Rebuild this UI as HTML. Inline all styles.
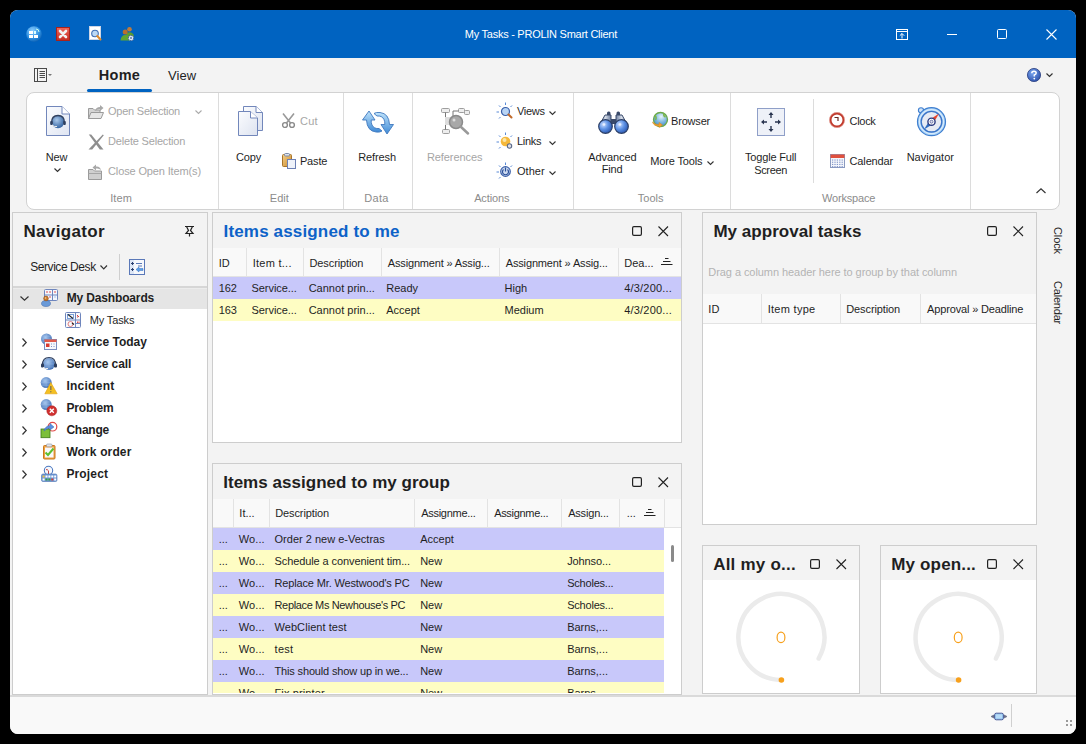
<!DOCTYPE html><html><head><meta charset="utf-8"><style>
html,body{margin:0;padding:0;background:#000;width:1086px;height:744px;overflow:hidden;}
.t{position:absolute;white-space:nowrap;line-height:1;font-family:"Liberation Sans",sans-serif}
svg{overflow:visible}
</style></head><body>
<div style="position:absolute;left:10px;top:10px;width:1066px;height:724px;border-radius:8px;overflow:hidden;background:#f3f3f3">
<div style="position:absolute;left:0px;top:0px;width:1066px;height:48px;background:#0063c1"></div>
<div style="position:absolute;left:0px;top:685px;width:1066px;height:39px;background:#f9f9f9;border-top:2px solid #dadada;box-sizing:border-box"></div>
</div>
<div style="position:absolute;left:26px;top:92px;width:1034px;height:118px;background:#fff;border:1px solid #d2d2d2;border-radius:8px;box-sizing:border-box"></div>
<div style="position:absolute;left:218px;top:93px;width:1px;height:116px;background:#dcdcdc"></div>
<div style="position:absolute;left:343px;top:93px;width:1px;height:116px;background:#dcdcdc"></div>
<div style="position:absolute;left:412px;top:93px;width:1px;height:116px;background:#dcdcdc"></div>
<div style="position:absolute;left:573px;top:93px;width:1px;height:116px;background:#dcdcdc"></div>
<div style="position:absolute;left:730px;top:93px;width:1px;height:116px;background:#dcdcdc"></div>
<div style="position:absolute;left:970px;top:93px;width:1px;height:116px;background:#dcdcdc"></div>
<div style="position:absolute;left:813px;top:99px;width:1px;height:84px;background:#dcdcdc"></div>
<div style="position:absolute;left:87px;top:89px;width:65px;height:3px;background:#0063c1;border-radius:2px"></div>
<div class="t" style="left:464.84px;top:28.54px;font-size:11px;color:#ffffff;letter-spacing:-0.261px;">My Tasks - PROLIN Smart Client</div>
<div class="t" style="left:98.73px;top:68.08px;font-size:14.5px;color:#1f1f1f;font-weight:bold;letter-spacing:0.300px;">Home</div>
<div class="t" style="left:168.02px;top:69.35px;font-size:13px;color:#1f1f1f;letter-spacing:0.033px;">View</div>
<div class="t" style="left:108.04px;top:106.04px;font-size:11px;color:#a6a6a6;letter-spacing:-0.233px;">Open Selection</div>
<div class="t" style="left:108.04px;top:135.74px;font-size:11px;color:#a6a6a6;letter-spacing:-0.188px;">Delete Selection</div>
<div class="t" style="left:108.04px;top:165.64px;font-size:11px;color:#a6a6a6;letter-spacing:-0.134px;">Close Open Item(s)</div>
<div class="t" style="left:45.64px;top:152.04px;font-size:11px;color:#1f1f1f;letter-spacing:-0.063px;">New</div>
<div class="t" style="left:110.14px;top:193.04px;font-size:11px;color:#8c8c8c;letter-spacing:0.163px;">Item</div>
<div class="t" style="left:235.94px;top:151.84px;font-size:11px;color:#1f1f1f;letter-spacing:-0.099px;">Copy</div>
<div class="t" style="left:299.94px;top:116.04px;font-size:11px;color:#a6a6a6;letter-spacing:0.300px;">Cut</div>
<div class="t" style="left:299.94px;top:155.74px;font-size:11px;color:#1f1f1f;letter-spacing:-0.162px;">Paste</div>
<div class="t" style="left:269.84px;top:193.04px;font-size:11px;color:#8c8c8c;letter-spacing:0.009px;">Edit</div>
<div class="t" style="left:358.14px;top:152.04px;font-size:11px;color:#1f1f1f;letter-spacing:-0.106px;">Refresh</div>
<div class="t" style="left:364.34px;top:193.04px;font-size:11px;color:#8c8c8c;letter-spacing:0.300px;">Data</div>
<div class="t" style="left:426.94px;top:152.04px;font-size:11px;color:#a6a6a6;letter-spacing:-0.085px;">References</div>
<div class="t" style="left:516.94px;top:106.04px;font-size:11px;color:#1f1f1f;letter-spacing:-0.300px;">Views</div>
<div class="t" style="left:516.94px;top:136.04px;font-size:11px;color:#1f1f1f;letter-spacing:-0.300px;">Links</div>
<div class="t" style="left:516.94px;top:166.34px;font-size:11px;color:#1f1f1f;letter-spacing:0.068px;">Other</div>
<div class="t" style="left:474.14px;top:193.04px;font-size:11px;color:#8c8c8c;letter-spacing:-0.099px;">Actions</div>
<div class="t" style="left:588.24px;top:152.04px;font-size:11px;color:#1f1f1f;letter-spacing:-0.077px;">Advanced</div>
<div class="t" style="left:601.84px;top:164.44px;font-size:11px;color:#1f1f1f;letter-spacing:-0.206px;">Find</div>
<div class="t" style="left:671.04px;top:115.84px;font-size:11px;color:#1f1f1f;letter-spacing:-0.193px;">Browser</div>
<div class="t" style="left:650.14px;top:155.64px;font-size:11px;color:#1f1f1f;letter-spacing:-0.124px;">More Tools</div>
<div class="t" style="left:637.64px;top:193.04px;font-size:11px;color:#8c8c8c;letter-spacing:0.075px;">Tools</div>
<div class="t" style="left:745.04px;top:151.64px;font-size:11px;color:#1f1f1f;letter-spacing:-0.171px;">Toggle Full</div>
<div class="t" style="left:754.24px;top:164.54px;font-size:11px;color:#1f1f1f;letter-spacing:-0.354px;">Screen</div>
<div class="t" style="left:849.54px;top:116.24px;font-size:11px;color:#1f1f1f;letter-spacing:-0.300px;">Clock</div>
<div class="t" style="left:849.54px;top:155.84px;font-size:11px;color:#1f1f1f;letter-spacing:-0.137px;">Calendar</div>
<div class="t" style="left:906.64px;top:151.64px;font-size:11px;color:#1f1f1f;letter-spacing:0.038px;">Navigator</div>
<div class="t" style="left:822.04px;top:193.04px;font-size:11px;color:#8c8c8c;letter-spacing:-0.192px;">Workspace</div>
<div style="position:absolute;left:12px;top:212px;width:196px;height:483px;background:#fff;border:1px solid #cdcdcd;box-sizing:border-box"></div>
<div style="position:absolute;left:13px;top:213px;width:194px;height:75px;background:#f3f3f3"></div>
<div style="position:absolute;left:13px;top:286px;width:194px;height:2px;background:#d6d6d6"></div>
<div style="position:absolute;left:13px;top:288px;width:194px;height:1px;background:#ececec"></div>
<div style="position:absolute;left:13px;top:289px;width:194px;height:20px;background:#e5e5e5"></div>
<div class="t" style="left:23.48px;top:223.16px;font-size:17px;color:#1f1f1f;font-weight:bold;letter-spacing:0.332px;">Navigator</div>
<div class="t" style="left:30.18px;top:261.29px;font-size:12px;color:#1f1f1f;letter-spacing:-0.430px;">Service Desk</div>
<div style="position:absolute;left:119px;top:254px;width:1px;height:26px;background:#cfcfcf"></div>
<div class="t" style="left:66.68px;top:291.89px;font-size:12px;color:#1f1f1f;font-weight:bold;letter-spacing:-0.149px;">My Dashboards</div>
<div class="t" style="left:89.64px;top:315.04px;font-size:11px;color:#1f1f1f;letter-spacing:-0.122px;">My Tasks</div>
<div class="t" style="left:66.38px;top:336.19px;font-size:12px;color:#1f1f1f;font-weight:bold;letter-spacing:0.007px;">Service Today</div>
<div class="t" style="left:66.38px;top:358.19px;font-size:12px;color:#1f1f1f;font-weight:bold;letter-spacing:-0.099px;">Service call</div>
<div class="t" style="left:66.38px;top:380.19px;font-size:12px;color:#1f1f1f;font-weight:bold;letter-spacing:0.266px;">Incident</div>
<div class="t" style="left:66.38px;top:402.19px;font-size:12px;color:#1f1f1f;font-weight:bold;letter-spacing:-0.109px;">Problem</div>
<div class="t" style="left:66.38px;top:424.19px;font-size:12px;color:#1f1f1f;font-weight:bold;letter-spacing:-0.228px;">Change</div>
<div class="t" style="left:66.38px;top:446.19px;font-size:12px;color:#1f1f1f;font-weight:bold;letter-spacing:0.130px;">Work order</div>
<div class="t" style="left:66.38px;top:468.19px;font-size:12px;color:#1f1f1f;font-weight:bold;letter-spacing:0.163px;">Project</div>
<div style="position:absolute;left:212px;top:212px;width:470px;height:231px;background:#fff;border:1px solid #cdcdcd;box-sizing:border-box"></div>
<div style="position:absolute;left:213px;top:213px;width:468px;height:35px;background:#f3f3f3"></div>
<div style="position:absolute;left:213px;top:248px;width:468px;height:28px;background:#f9f9f9"></div>
<div style="position:absolute;left:213px;top:276px;width:468px;height:1px;background:#e3e3e3"></div>
<div style="position:absolute;left:246px;top:248px;width:1px;height:28px;background:#e3e3e3"></div>
<div style="position:absolute;left:303px;top:248px;width:1px;height:28px;background:#e3e3e3"></div>
<div style="position:absolute;left:381px;top:248px;width:1px;height:28px;background:#e3e3e3"></div>
<div style="position:absolute;left:499px;top:248px;width:1px;height:28px;background:#e3e3e3"></div>
<div style="position:absolute;left:618px;top:248px;width:1px;height:28px;background:#e3e3e3"></div>
<div style="position:absolute;left:213px;top:277px;width:468px;height:22px;background:#c8c8fa"></div>
<div style="position:absolute;left:213px;top:299px;width:468px;height:22px;background:#fefdc3"></div>
<div class="t" style="left:223.58px;top:223.16px;font-size:17px;color:#0d62c8;font-weight:bold;letter-spacing:0.152px;">Items assigned to me</div>
<div class="t" style="left:218.64px;top:257.54px;font-size:11px;color:#1f1f1f;">ID</div>
<div class="t" style="left:252.64px;top:257.54px;font-size:11px;color:#1f1f1f;letter-spacing:0.276px;">Item t...</div>
<div class="t" style="left:309.54px;top:257.54px;font-size:11px;color:#1f1f1f;letter-spacing:-0.114px;">Description</div>
<div class="t" style="left:387.84px;top:257.54px;font-size:11px;color:#1f1f1f;letter-spacing:-0.164px;">Assignment » Assig...</div>
<div class="t" style="left:505.74px;top:257.54px;font-size:11px;color:#1f1f1f;letter-spacing:-0.149px;">Assignment » Assig...</div>
<div class="t" style="left:624.34px;top:257.54px;font-size:11px;color:#1f1f1f;letter-spacing:-0.033px;">Dea...</div>
<div class="t" style="left:218.64px;top:283.04px;font-size:11px;color:#1f1f1f;">162</div>
<div class="t" style="left:251.54px;top:283.04px;font-size:11px;color:#1f1f1f;letter-spacing:-0.063px;">Service...</div>
<div class="t" style="left:308.64px;top:283.04px;font-size:11px;color:#1f1f1f;letter-spacing:0.019px;">Cannot prin...</div>
<div class="t" style="left:386.24px;top:283.04px;font-size:11px;color:#1f1f1f;">Ready</div>
<div class="t" style="left:504.54px;top:283.04px;font-size:11px;color:#1f1f1f;">High</div>
<div class="t" style="left:624.34px;top:283.04px;font-size:11px;color:#1f1f1f;letter-spacing:0.168px;">4/3/200...</div>
<div class="t" style="left:218.64px;top:305.04px;font-size:11px;color:#1f1f1f;">163</div>
<div class="t" style="left:251.54px;top:305.04px;font-size:11px;color:#1f1f1f;letter-spacing:-0.063px;">Service...</div>
<div class="t" style="left:308.64px;top:305.04px;font-size:11px;color:#1f1f1f;letter-spacing:0.019px;">Cannot prin...</div>
<div class="t" style="left:386.24px;top:305.04px;font-size:11px;color:#1f1f1f;">Accept</div>
<div class="t" style="left:504.54px;top:305.04px;font-size:11px;color:#1f1f1f;">Medium</div>
<div class="t" style="left:624.34px;top:305.04px;font-size:11px;color:#1f1f1f;letter-spacing:0.168px;">4/3/200...</div>
<div style="position:absolute;left:212px;top:463px;width:470px;height:232px;background:#fff;border:1px solid #cdcdcd;box-sizing:border-box"></div>
<div style="position:absolute;left:213px;top:464px;width:468px;height:35px;background:#f3f3f3"></div>
<div style="position:absolute;left:213px;top:499px;width:468px;height:28px;background:#f9f9f9"></div>
<div style="position:absolute;left:213px;top:527px;width:468px;height:1px;background:#e3e3e3"></div>
<div style="position:absolute;left:233px;top:499px;width:1px;height:28px;background:#e3e3e3"></div>
<div style="position:absolute;left:269px;top:499px;width:1px;height:28px;background:#e3e3e3"></div>
<div style="position:absolute;left:414px;top:499px;width:1px;height:28px;background:#e3e3e3"></div>
<div style="position:absolute;left:487px;top:499px;width:1px;height:28px;background:#e3e3e3"></div>
<div style="position:absolute;left:561px;top:499px;width:1px;height:28px;background:#e3e3e3"></div>
<div style="position:absolute;left:619px;top:499px;width:1px;height:28px;background:#e3e3e3"></div>
<div style="position:absolute;left:664px;top:499px;width:1px;height:28px;background:#e3e3e3"></div>
<div class="t" style="left:223.18px;top:474.16px;font-size:17px;color:#1f1f1f;font-weight:bold;letter-spacing:0.036px;">Items assigned to my group</div>
<div class="t" style="left:239.34px;top:507.94px;font-size:11px;color:#1f1f1f;">It...</div>
<div class="t" style="left:275.24px;top:507.94px;font-size:11px;color:#1f1f1f;letter-spacing:-0.114px;">Description</div>
<div class="t" style="left:421.24px;top:507.94px;font-size:11px;color:#1f1f1f;letter-spacing:-0.288px;">Assignme...</div>
<div class="t" style="left:494.14px;top:507.94px;font-size:11px;color:#1f1f1f;letter-spacing:-0.298px;">Assignme...</div>
<div class="t" style="left:568.14px;top:507.94px;font-size:11px;color:#1f1f1f;letter-spacing:-0.175px;">Assign...</div>
<div class="t" style="left:626.64px;top:507.94px;font-size:11px;color:#1f1f1f;">...</div>
<div style="position:absolute;left:213px;top:528px;width:451px;height:165px;overflow:hidden">
<div style="position:absolute;left:0px;top:0px;width:451px;height:22px;background:#c8c8fa"></div>
<div style="position:absolute;left:0px;top:22px;width:451px;height:22px;background:#fefdc3"></div>
<div style="position:absolute;left:0px;top:44px;width:451px;height:22px;background:#c8c8fa"></div>
<div style="position:absolute;left:0px;top:66px;width:451px;height:22px;background:#fefdc3"></div>
<div style="position:absolute;left:0px;top:88px;width:451px;height:22px;background:#c8c8fa"></div>
<div style="position:absolute;left:0px;top:110px;width:451px;height:22px;background:#fefdc3"></div>
<div style="position:absolute;left:0px;top:132px;width:451px;height:22px;background:#c8c8fa"></div>
<div style="position:absolute;left:0px;top:154px;width:451px;height:22px;background:#fefdc3"></div>
</div>
<div style="position:absolute;left:0;top:0;width:1086px;height:693px;overflow:hidden">
<div class="t" style="left:218.64px;top:534.34px;font-size:11px;color:#1f1f1f;letter-spacing:0.006px;">...</div>
<div class="t" style="left:238.84px;top:534.34px;font-size:11px;color:#1f1f1f;letter-spacing:0.078px;">Wo...</div>
<div class="t" style="left:274.54px;top:534.34px;font-size:11px;color:#1f1f1f;letter-spacing:0.007px;">Order 2 new e-Vectras</div>
<div class="t" style="left:420.24px;top:534.34px;font-size:11px;color:#1f1f1f;letter-spacing:0.011px;">Accept</div>
<div class="t" style="left:218.64px;top:556.34px;font-size:11px;color:#1f1f1f;letter-spacing:0.006px;">...</div>
<div class="t" style="left:238.84px;top:556.34px;font-size:11px;color:#1f1f1f;letter-spacing:0.078px;">Wo...</div>
<div class="t" style="left:274.54px;top:556.34px;font-size:11px;color:#1f1f1f;letter-spacing:-0.096px;">Schedule a convenient tim...</div>
<div class="t" style="left:420.24px;top:556.34px;font-size:11px;color:#1f1f1f;letter-spacing:-0.063px;">New</div>
<div class="t" style="left:567.14px;top:556.34px;font-size:11px;color:#1f1f1f;letter-spacing:-0.094px;">Johnso...</div>
<div class="t" style="left:218.64px;top:578.34px;font-size:11px;color:#1f1f1f;letter-spacing:0.006px;">...</div>
<div class="t" style="left:238.84px;top:578.34px;font-size:11px;color:#1f1f1f;letter-spacing:0.078px;">Wo...</div>
<div class="t" style="left:274.54px;top:578.34px;font-size:11px;color:#1f1f1f;letter-spacing:-0.152px;">Replace Mr. Westwood&#x27;s PC</div>
<div class="t" style="left:420.24px;top:578.34px;font-size:11px;color:#1f1f1f;letter-spacing:-0.063px;">New</div>
<div class="t" style="left:567.14px;top:578.34px;font-size:11px;color:#1f1f1f;letter-spacing:-0.202px;">Scholes...</div>
<div class="t" style="left:218.64px;top:600.34px;font-size:11px;color:#1f1f1f;letter-spacing:0.006px;">...</div>
<div class="t" style="left:238.84px;top:600.34px;font-size:11px;color:#1f1f1f;letter-spacing:0.078px;">Wo...</div>
<div class="t" style="left:274.54px;top:600.34px;font-size:11px;color:#1f1f1f;letter-spacing:-0.355px;">Replace Ms Newhouse&#x27;s PC</div>
<div class="t" style="left:420.24px;top:600.34px;font-size:11px;color:#1f1f1f;letter-spacing:-0.063px;">New</div>
<div class="t" style="left:567.14px;top:600.34px;font-size:11px;color:#1f1f1f;letter-spacing:-0.202px;">Scholes...</div>
<div class="t" style="left:218.64px;top:622.34px;font-size:11px;color:#1f1f1f;letter-spacing:0.006px;">...</div>
<div class="t" style="left:238.84px;top:622.34px;font-size:11px;color:#1f1f1f;letter-spacing:0.078px;">Wo...</div>
<div class="t" style="left:274.54px;top:622.34px;font-size:11px;color:#1f1f1f;letter-spacing:0.058px;">WebClient test</div>
<div class="t" style="left:420.24px;top:622.34px;font-size:11px;color:#1f1f1f;letter-spacing:-0.063px;">New</div>
<div class="t" style="left:567.14px;top:622.34px;font-size:11px;color:#1f1f1f;letter-spacing:-0.010px;">Barns,...</div>
<div class="t" style="left:218.64px;top:644.34px;font-size:11px;color:#1f1f1f;letter-spacing:0.006px;">...</div>
<div class="t" style="left:238.84px;top:644.34px;font-size:11px;color:#1f1f1f;letter-spacing:0.078px;">Wo...</div>
<div class="t" style="left:274.54px;top:644.34px;font-size:11px;color:#1f1f1f;letter-spacing:0.300px;">test</div>
<div class="t" style="left:420.24px;top:644.34px;font-size:11px;color:#1f1f1f;letter-spacing:-0.063px;">New</div>
<div class="t" style="left:567.14px;top:644.34px;font-size:11px;color:#1f1f1f;letter-spacing:-0.010px;">Barns,...</div>
<div class="t" style="left:218.64px;top:666.34px;font-size:11px;color:#1f1f1f;letter-spacing:0.006px;">...</div>
<div class="t" style="left:238.84px;top:666.34px;font-size:11px;color:#1f1f1f;letter-spacing:0.078px;">Wo...</div>
<div class="t" style="left:274.54px;top:666.34px;font-size:11px;color:#1f1f1f;letter-spacing:-0.155px;">This should show up in we...</div>
<div class="t" style="left:420.24px;top:666.34px;font-size:11px;color:#1f1f1f;letter-spacing:-0.063px;">New</div>
<div class="t" style="left:567.14px;top:666.34px;font-size:11px;color:#1f1f1f;letter-spacing:-0.010px;">Barns,...</div>
<div class="t" style="left:218.64px;top:688.34px;font-size:11px;color:#1f1f1f;letter-spacing:0.006px;">...</div>
<div class="t" style="left:238.84px;top:688.34px;font-size:11px;color:#1f1f1f;letter-spacing:0.078px;">Wo...</div>
<div class="t" style="left:274.54px;top:688.34px;font-size:11px;color:#1f1f1f;letter-spacing:0.119px;">Fix printer</div>
<div class="t" style="left:420.24px;top:688.34px;font-size:11px;color:#1f1f1f;letter-spacing:-0.063px;">New</div>
<div class="t" style="left:567.14px;top:688.34px;font-size:11px;color:#1f1f1f;letter-spacing:-0.010px;">Barns,...</div>
</div>
<div style="position:absolute;left:671px;top:545px;width:3px;height:17px;background:#8a8a8a;border-radius:2px"></div>
<div style="position:absolute;left:702px;top:212px;width:335px;height:313px;background:#fff;border:1px solid #cdcdcd;box-sizing:border-box"></div>
<div style="position:absolute;left:703px;top:213px;width:333px;height:81px;background:#f3f3f3"></div>
<div style="position:absolute;left:703px;top:294px;width:333px;height:30px;background:#f9f9f9"></div>
<div style="position:absolute;left:703px;top:323px;width:333px;height:1px;background:#e3e3e3"></div>
<div style="position:absolute;left:761px;top:294px;width:1px;height:29px;background:#e3e3e3"></div>
<div style="position:absolute;left:840px;top:294px;width:1px;height:29px;background:#e3e3e3"></div>
<div style="position:absolute;left:920px;top:294px;width:1px;height:29px;background:#e3e3e3"></div>
<div class="t" style="left:713.38px;top:222.76px;font-size:17px;color:#1f1f1f;font-weight:bold;letter-spacing:0.036px;">My approval tasks</div>
<div class="t" style="left:708.34px;top:267.44px;font-size:11px;color:#b3b3b3;letter-spacing:-0.067px;">Drag a column header here to group by that column</div>
<div class="t" style="left:708.34px;top:304.24px;font-size:11px;color:#1f1f1f;">ID</div>
<div class="t" style="left:767.64px;top:304.24px;font-size:11px;color:#1f1f1f;letter-spacing:0.293px;">Item type</div>
<div class="t" style="left:846.24px;top:304.24px;font-size:11px;color:#1f1f1f;letter-spacing:-0.104px;">Description</div>
<div class="t" style="left:927.04px;top:304.24px;font-size:11px;color:#1f1f1f;letter-spacing:-0.149px;">Approval » Deadline</div>
<div style="position:absolute;left:702px;top:545px;width:158px;height:149px;background:#fff;border:1px solid #cdcdcd;box-sizing:border-box"></div>
<div style="position:absolute;left:703px;top:546px;width:156px;height:34px;background:#f3f3f3"></div>
<div class="t" style="left:713.18px;top:555.96px;font-size:17px;color:#1f1f1f;font-weight:bold;letter-spacing:0.217px;">All my o...</div>
<div style="position:absolute;left:880px;top:545px;width:157px;height:149px;background:#fff;border:1px solid #cdcdcd;box-sizing:border-box"></div>
<div style="position:absolute;left:881px;top:546px;width:155px;height:34px;background:#f3f3f3"></div>
<div class="t" style="left:891.18px;top:555.96px;font-size:17px;color:#1f1f1f;font-weight:bold;letter-spacing:0.172px;">My open...</div>
<svg style="position:absolute;left:26px;top:26px" width="16" height="16" viewBox="0 0 16 16"><defs><radialGradient id="g1" cx="0.4" cy="0.3" r="0.8"><stop offset="0" stop-color="#8fd0ff"/><stop offset="0.6" stop-color="#2a8de0"/><stop offset="1" stop-color="#0b58a8"/></radialGradient></defs><circle cx="8" cy="8" r="7.8" fill="url(#g1)"/><rect x="3" y="5" width="4" height="3" fill="#fff"/><rect x="8" y="5" width="2" height="3" fill="#dff"/><rect x="3" y="9" width="4" height="3" fill="#fff"/><rect x="8" y="9" width="4" height="3" fill="#fff"/><path d="M10 3 Q13 3 13 6" stroke="#cfe" stroke-width="1" fill="none"/></svg>
<svg style="position:absolute;left:56px;top:27px" width="14" height="14" viewBox="0 0 14 14"><defs><linearGradient id="g2" x1="0" y1="0" x2="0" y2="1"><stop offset="0" stop-color="#f0665a"/><stop offset="1" stop-color="#c42b22"/></linearGradient></defs><rect x="0.5" y="0.5" width="13" height="13" fill="url(#g2)" stroke="#a8221b"/><path d="M4 4 L10 10 M10 4 L4 10" stroke="#f2f2f2" stroke-width="2.6" stroke-linecap="round"/></svg>
<svg style="position:absolute;left:89px;top:26px" width="13" height="15" viewBox="0 0 13 15"><rect x="0.5" y="0.5" width="11" height="13" fill="#fff" stroke="#cdd6e6"/><circle cx="6" cy="7.5" r="3.3" fill="#bcd9f5" stroke="#3f6fb5" stroke-width="1.1"/><path d="M8.3 10 L11.5 13.5" stroke="#e08a2a" stroke-width="2" stroke-linecap="round"/></svg>
<svg style="position:absolute;left:120px;top:26px" width="15" height="16" viewBox="0 0 15 16"><circle cx="9.5" cy="3.3" r="2.3" fill="#c07a3a"/><path d="M5.5 10.5 Q6.5 6.2 9.5 6.2 Q13 6.2 14 10 L14 11 Z" fill="#5a9e2e"/><circle cx="5.2" cy="6" r="2.5" fill="#b86f2f"/><path d="M0.5 14.5 Q1.2 9 5.2 9 Q9.5 9 10.5 14.5 Z" fill="#5fa632"/><circle cx="11" cy="12" r="2.6" fill="#e8eef8" stroke="#4a6aa0" stroke-width="1.1" stroke-dasharray="1.2 0.8"/><circle cx="11" cy="12" r="0.9" fill="#4a6aa0"/></svg>
<svg style="position:absolute;left:896px;top:29px" width="12" height="11" viewBox="0 0 12 11"><rect x="0.5" y="0.5" width="11" height="10" fill="none" stroke="#fff" stroke-width="1"/><path d="M0.5 2.5 H11.5" stroke="#fff"/><path d="M6 9.5 V4.5 M3.8 6.7 L6 4.5 L8.2 6.7" stroke="#fff" fill="none" stroke-width="1"/></svg>
<div style="position:absolute;left:947px;top:34px;width:10px;height:1px;background:#fff"></div>
<svg style="position:absolute;left:997px;top:29px" width="10" height="10" viewBox="0 0 10 10"><rect x="0.5" y="0.5" width="9" height="9" rx="1" fill="none" stroke="#fff"/></svg>
<svg style="position:absolute;left:1046px;top:29px" width="11" height="11" viewBox="0 0 11 11"><path d="M0.5 0.5 L10.5 10.5 M10.5 0.5 L0.5 10.5" stroke="#fff" stroke-width="1.1"/></svg>
<svg style="position:absolute;left:34px;top:68px" width="20" height="14" viewBox="0 0 20 14"><rect x="0.5" y="0.5" width="12" height="13" fill="none" stroke="#4a4a4a"/><path d="M3.5 0.5 V13.5" stroke="#4a4a4a"/><path d="M5.5 3.5 H11 M5.5 5.5 H11 M5.5 7.5 H11 M5.5 9.5 H11" stroke="#4a4a4a"/><path d="M14 6 L18 6 L16 8 Z" fill="#777"/></svg>
<svg style="position:absolute;left:1027px;top:68px" width="14" height="14" viewBox="0 0 14 14"><defs><radialGradient id="gh" cx="0.4" cy="0.35" r="0.7"><stop offset="0" stop-color="#7aa6f0"/><stop offset="1" stop-color="#2b4fa8"/></radialGradient></defs><circle cx="7" cy="7" r="6.6" fill="url(#gh)" stroke="#2a3f80" stroke-width="0.8"/><path d="M4.8 5.3 Q4.8 3.2 7 3.2 Q9.2 3.2 9.2 5 Q9.2 6.3 7.3 7 L7.3 8.6" fill="none" stroke="#fff" stroke-width="1.5"/><circle cx="7.3" cy="10.6" r="0.9" fill="#fff"/></svg>
<svg style="position:absolute;left:1046px;top:73px" width="7" height="5" viewBox="0 0 7 5"><path d="M0.5 0.5 L3.5 3.5 L6.5 0.5" fill="none" stroke="#333" stroke-width="1.2"/></svg>
<svg style="position:absolute;left:46px;top:106px" width="25" height="30" viewBox="0 0 25 30"><defs><linearGradient id="gd" x1="0" y1="0" x2="1" y2="1"><stop offset="0" stop-color="#fbfcfe"/><stop offset="1" stop-color="#dfe5f2"/></linearGradient><radialGradient id="gg" cx="0.4" cy="0.35" r="0.7"><stop offset="0" stop-color="#a9c8ea"/><stop offset="1" stop-color="#2d5e9e"/></radialGradient></defs><path d="M0.5 0.5 H16 L23.5 8 V29.5 H0.5 Z" fill="url(#gd)" stroke="#7287bb"/><path d="M16 0.5 V8 H23.5" fill="#fff" stroke="#7287bb"/><circle cx="12" cy="16" r="6.2" fill="url(#gg)"/><path d="M5.5 17 Q5.5 9.5 12 9.5 Q18.5 9.5 18.5 17" fill="none" stroke="#2f3f5e" stroke-width="1.3"/><rect x="4.2" y="15" width="2.6" height="4" rx="1" fill="#2f3f5e"/><rect x="17.2" y="15" width="2.6" height="4" rx="1" fill="#2f3f5e"/><path d="M6 19 Q8 21 11 20.5" stroke="#eee" stroke-width="1" fill="none"/></svg>
<svg style="position:absolute;left:54px;top:168px" width="8" height="5" viewBox="0 0 8 5"><path d="M0.5 0.5 L3.5 3.5 L6.5 0.5" fill="none" stroke="#333" stroke-width="1.2"/></svg>
<svg style="position:absolute;left:88px;top:104px" width="16" height="16" viewBox="0 0 16 16"><path d="M0.5 4.5 H5 L6.5 6 H12 V14.5 H0.5 Z" fill="#d4d4d4" stroke="#9a9a9a"/><path d="M0.5 14.5 L3 8.5 H15.5 L13 14.5 Z" fill="#e6e6e6" stroke="#9a9a9a"/><path d="M7 7 Q8 3 12 3 L12 1 L15.5 4 L12 7 L12 5 Q9 5 7 7" fill="#a8a8a8"/></svg>
<svg style="position:absolute;left:195px;top:110px" width="7" height="5" viewBox="0 0 7 5"><path d="M0.5 0.5 L3.5 3.5 L6.5 0.5" fill="none" stroke="#aaa" stroke-width="1.1"/></svg>
<svg style="position:absolute;left:88px;top:134px" width="16" height="16" viewBox="0 0 16 16"><path d="M0.8 0.5 L3.2 0.5 L15.5 15.5 L11.8 15.5 Z" fill="#8e8e8e"/><path d="M15.8 1.2 L14.8 0.5 L0.5 15.5 L4.2 15.5 Z" fill="#8e8e8e"/></svg>
<svg style="position:absolute;left:88px;top:164px" width="16" height="16" viewBox="0 0 16 16"><path d="M0.5 5.5 H5 L6.5 7 H13.5 V15.5 H0.5 Z" fill="#cfcfcf" stroke="#9a9a9a"/><path d="M0.5 9.5 H13.5" stroke="#a5a5a5"/><path d="M13 6 Q12 2 8 2.5 L8 0.5 L4.5 3.5 L8 6.5 L8 4.5 Q11 4 13 6" fill="#a8a8a8"/></svg>
<svg style="position:absolute;left:238px;top:106px" width="25" height="30" viewBox="0 0 25 30"><defs><linearGradient id="gc" x1="0" y1="0" x2="1" y2="1"><stop offset="0" stop-color="#fbfcfe"/><stop offset="1" stop-color="#dde3f0"/></linearGradient></defs><path d="M5.5 0.5 H18 L24.5 6.5 V24.5 H5.5 Z" fill="url(#gc)" stroke="#7287bb"/><path d="M18 0.5 V6.5 H24.5" fill="#fff" stroke="#7287bb"/><path d="M0.5 5.5 H12.5 L19.5 12 V29.5 H0.5 Z" fill="url(#gc)" stroke="#7287bb"/><path d="M12.5 5.5 V12 H19.5" fill="#fff" stroke="#7287bb"/></svg>
<svg style="position:absolute;left:281px;top:113px" width="15" height="15" viewBox="0 0 15 15"><path d="M2 0.5 L9.5 10 M13 0.5 L5.5 10" stroke="#9a9a9a" stroke-width="1.6"/><circle cx="4" cy="12" r="2.4" fill="none" stroke="#8a8a8a" stroke-width="1.4"/><circle cx="11" cy="12" r="2.4" fill="none" stroke="#8a8a8a" stroke-width="1.4"/></svg>
<svg style="position:absolute;left:282px;top:153px" width="14" height="16" viewBox="0 0 14 16"><defs><linearGradient id="gp" x1="0" y1="0" x2="1" y2="1"><stop offset="0" stop-color="#f5d08a"/><stop offset="1" stop-color="#c98a2e"/></linearGradient></defs><rect x="0.5" y="1.5" width="9" height="12" rx="1" fill="url(#gp)" stroke="#a8742a"/><rect x="2.5" y="0.5" width="5" height="2.5" rx="1" fill="#dfe3ea" stroke="#7a8aa8"/><rect x="5.5" y="6.5" width="8" height="9" fill="#eef2fa" stroke="#6c80b5"/></svg>
<svg style="position:absolute;left:362px;top:110px" width="32" height="25" viewBox="0 0 32 25"><defs><linearGradient id="gr" x1="0" y1="0" x2="0" y2="1"><stop offset="0" stop-color="#bfe3fb"/><stop offset="1" stop-color="#3f8ad6"/></linearGradient></defs><path d="M7 1 L0.5 10 H4.5 Q5 21 14 22 Q18 22.5 20 21 L17 18.5 Q12 19 10 15 Q9 13 9.2 10 H13 Z" fill="url(#gr)" stroke="#3f78be" stroke-width="0.9"/><path d="M25 24 L31.5 14.5 H27.5 Q27 3.5 18 2.5 Q14 2 12 3.5 L15 6 Q20 5.5 22 9.5 Q23 11.5 22.8 14.5 H19 Z" fill="url(#gr)" stroke="#3f78be" stroke-width="0.9"/></svg>
<svg style="position:absolute;left:441px;top:108px" width="29" height="27" viewBox="0 0 29 27"><rect x="0.5" y="0.5" width="8" height="4" rx="1" fill="#eee" stroke="#9e9e9e"/><rect x="17.5" y="0.5" width="6" height="4" rx="1" fill="#eee" stroke="#9e9e9e"/><rect x="23.5" y="2.5" width="5" height="4" rx="1" fill="#eee" stroke="#9e9e9e"/><rect x="1.5" y="21.5" width="7" height="4" rx="1" fill="#eee" stroke="#9e9e9e"/><path d="M4.5 4.5 V21.5 M12 8 V3 H17.5" fill="none" stroke="#777" stroke-width="1"/><rect x="4" y="9" width="8" height="8" fill="#ddd"/><circle cx="15" cy="14" r="6.5" fill="#a8a8a8" stroke="#8a8a8a" stroke-width="1.5"/><circle cx="13" cy="12" r="1.5" fill="#ddd"/><path d="M19.5 18.5 L27 25.5" stroke="#999" stroke-width="2.5" stroke-linecap="round"/></svg>
<svg style="position:absolute;left:496px;top:102px" width="18" height="19" viewBox="0 0 18 19"><path d="M9.5 0.5 V3.0" stroke="#5a8ad6" stroke-width="1"/><path d="M0.5 10.0 H3" stroke="#5a8ad6" stroke-width="1"/><path d="M3 3.5 L4.5 5.0" stroke="#5a8ad6" stroke-width="1"/><path d="M16 3.5 L14.5 5.0" stroke="#5a8ad6" stroke-width="1"/><path d="M3 16.5 L4.5 15.0" stroke="#5a8ad6" stroke-width="1"/><circle cx="9.5" cy="9.5" r="4" fill="#b8d4f5" stroke="#3a5fa8" stroke-width="1.2"/><path d="M12.5 12.5 L15.5 15.5" stroke="#c06a2a" stroke-width="2" stroke-linecap="round"/></svg>
<svg style="position:absolute;left:496px;top:132px" width="18" height="19" viewBox="0 0 18 19"><path d="M9.5 0.5 V3.0" stroke="#5a8ad6" stroke-width="1"/><path d="M0.5 10.0 H3" stroke="#5a8ad6" stroke-width="1"/><path d="M3 3.5 L4.5 5.0" stroke="#5a8ad6" stroke-width="1"/><path d="M16 3.5 L14.5 5.0" stroke="#5a8ad6" stroke-width="1"/><path d="M3 16.5 L4.5 15.0" stroke="#5a8ad6" stroke-width="1"/><circle cx="9.5" cy="9.5" r="4.8" fill="#f5b83a"/><circle cx="8.5" cy="8" r="2" fill="#fbe6a8"/><circle cx="13.5" cy="14" r="2.2" fill="#e0e0e8" stroke="#5a6a8a" stroke-width="1.1"/></svg>
<svg style="position:absolute;left:496px;top:162px" width="18" height="19" viewBox="0 0 18 19"><path d="M9.5 0.5 V3.0" stroke="#5a8ad6" stroke-width="1"/><path d="M0.5 10.0 H3" stroke="#5a8ad6" stroke-width="1"/><path d="M3 3.5 L4.5 5.0" stroke="#5a8ad6" stroke-width="1"/><path d="M16 3.5 L14.5 5.0" stroke="#5a8ad6" stroke-width="1"/><path d="M3 16.5 L4.5 15.0" stroke="#5a8ad6" stroke-width="1"/><circle cx="9.5" cy="9.5" r="4.8" fill="#cfdcf2" stroke="#3a5fa8" stroke-width="1.2"/><path d="M7.5 7.5 A3 3 0 1 0 11.5 7.5 M9.5 5.5 V9.5" fill="none" stroke="#2a4f98" stroke-width="1.2"/></svg>
<svg style="position:absolute;left:549px;top:111px" width="7" height="5" viewBox="0 0 7 5"><path d="M0.5 0.5 L3.5 3.5 L6.5 0.5" fill="none" stroke="#333" stroke-width="1.1"/></svg>
<svg style="position:absolute;left:549px;top:141px" width="7" height="5" viewBox="0 0 7 5"><path d="M0.5 0.5 L3.5 3.5 L6.5 0.5" fill="none" stroke="#333" stroke-width="1.1"/></svg>
<svg style="position:absolute;left:549px;top:171px" width="7" height="5" viewBox="0 0 7 5"><path d="M0.5 0.5 L3.5 3.5 L6.5 0.5" fill="none" stroke="#333" stroke-width="1.1"/></svg>
<svg style="position:absolute;left:598px;top:111px" width="31" height="23" viewBox="0 0 31 23"><defs><radialGradient id="gb" cx="0.35" cy="0.35" r="0.7"><stop offset="0" stop-color="#cfe0ff"/><stop offset="0.5" stop-color="#5f93e6"/><stop offset="1" stop-color="#2a57b0"/></radialGradient><linearGradient id="gbr" x1="0" y1="0" x2="1" y2="0"><stop offset="0" stop-color="#6d7fa0"/><stop offset="0.5" stop-color="#d8dfea"/><stop offset="1" stop-color="#6d7fa0"/></linearGradient></defs><rect x="9" y="0.5" width="3.5" height="5" rx="1.5" fill="#3a4a6a"/><rect x="18.5" y="0.5" width="3.5" height="5" rx="1.5" fill="#3a4a6a"/><path d="M1.5 14 L7 4 H13 V15 Z" fill="url(#gbr)" stroke="#3a4a6a"/><path d="M29.5 14 L24 4 H18 V15 Z" fill="url(#gbr)" stroke="#3a4a6a"/><rect x="13" y="8" width="5" height="5" fill="#3a4a6a"/><circle cx="7.5" cy="15.5" r="6.8" fill="url(#gb)" stroke="#2c3f66" stroke-width="1.2"/><circle cx="23.5" cy="15.5" r="6.8" fill="url(#gb)" stroke="#2c3f66" stroke-width="1.2"/><circle cx="6" cy="13.5" r="1.3" fill="#e8f0ff"/><circle cx="22" cy="13.5" r="1.3" fill="#e8f0ff"/></svg>
<svg style="position:absolute;left:652px;top:112px" width="16" height="16" viewBox="0 0 16 16"><defs><radialGradient id="gw" cx="0.55" cy="0.3" r="0.8"><stop offset="0" stop-color="#e8f4fb"/><stop offset="0.5" stop-color="#7fb8e0"/><stop offset="1" stop-color="#2f7cc0"/></radialGradient></defs><circle cx="8.5" cy="7.5" r="7" fill="url(#gw)" stroke="#6aa84a" stroke-width="1.3"/><path d="M3 3 Q5 6 3.5 8 M12 1.5 Q11 4 13.5 5" stroke="#7cb84a" stroke-width="1.5" fill="none"/><path d="M0.5 10 Q3 13 7 12.5 L7 10.5 L10.5 13 L7 15.5 L7 14 Q2 14.5 0.5 10 Z" fill="#f0a030" stroke="#d88a20" stroke-width="0.6"/></svg>
<svg style="position:absolute;left:707px;top:161px" width="7" height="5" viewBox="0 0 7 5"><path d="M0.5 0.5 L3.5 3.5 L6.5 0.5" fill="none" stroke="#333" stroke-width="1.1"/></svg>
<svg style="position:absolute;left:757px;top:108px" width="28" height="28" viewBox="0 0 28 28"><rect x="0.5" y="0.5" width="27" height="27" fill="#eef1f8" stroke="#8f9fc8"/><path d="M14 5 V10 M14 18 V23 M5 14 H10 M18 14 H23" stroke="#2a3550" stroke-width="1.4"/><path d="M11.5 7 L14 4 L16.5 7 Z M11.5 21 L14 24 L16.5 21 Z M7 11.5 L4 14 L7 16.5 Z M21 11.5 L24 14 L21 16.5 Z" fill="#2a3550"/></svg>
<svg style="position:absolute;left:829px;top:112px" width="16" height="16" viewBox="0 0 16 16"><circle cx="8" cy="8" r="6.6" fill="#fff" stroke="#c0392b" stroke-width="2.2"/><circle cx="8" cy="8" r="7.6" fill="none" stroke="#e8a8a0" stroke-width="0.6"/><path d="M5.5 5.5 H9 V9" fill="none" stroke="#6a2a22" stroke-width="1.2"/></svg>
<svg style="position:absolute;left:830px;top:154px" width="15" height="14" viewBox="0 0 15 14"><rect x="0.5" y="0.5" width="14" height="13" fill="#f4f6fb" stroke="#8a9ac0"/><rect x="0.5" y="0.5" width="14" height="3.5" fill="#e0503e"/><rect x="2.0" y="5.5" width="1.2" height="1.1" fill="#7f93c8"/><rect x="4.4" y="5.5" width="1.2" height="1.1" fill="#7f93c8"/><rect x="6.8" y="5.5" width="1.2" height="1.1" fill="#7f93c8"/><rect x="9.2" y="5.5" width="1.2" height="1.1" fill="#7f93c8"/><rect x="11.6" y="5.5" width="1.2" height="1.1" fill="#7f93c8"/><rect x="2.0" y="7.7" width="1.2" height="1.1" fill="#7f93c8"/><rect x="4.4" y="7.7" width="1.2" height="1.1" fill="#7f93c8"/><rect x="6.8" y="7.7" width="1.2" height="1.1" fill="#7f93c8"/><rect x="9.2" y="7.7" width="1.2" height="1.1" fill="#7f93c8"/><rect x="11.6" y="7.7" width="1.2" height="1.1" fill="#7f93c8"/><rect x="2.0" y="9.9" width="1.2" height="1.1" fill="#7f93c8"/><rect x="4.4" y="9.9" width="1.2" height="1.1" fill="#7f93c8"/><rect x="6.8" y="9.9" width="1.2" height="1.1" fill="#7f93c8"/><rect x="9.2" y="9.9" width="1.2" height="1.1" fill="#7f93c8"/><rect x="11.6" y="9.9" width="1.2" height="1.1" fill="#7f93c8"/><rect x="2.0" y="12.1" width="1.2" height="1.1" fill="#7f93c8"/><rect x="4.4" y="12.1" width="1.2" height="1.1" fill="#7f93c8"/><rect x="6.8" y="12.1" width="1.2" height="1.1" fill="#7f93c8"/><rect x="9.2" y="12.1" width="1.2" height="1.1" fill="#7f93c8"/><rect x="11.6" y="12.1" width="1.2" height="1.1" fill="#7f93c8"/></svg>
<svg style="position:absolute;left:916px;top:106px" width="31" height="31" viewBox="0 0 31 31"><circle cx="5" cy="4.3" r="2.6" fill="#cfe3f8" stroke="#3f7fd0" stroke-width="1.1"/><circle cx="15.5" cy="15.7" r="14" fill="#a9d1f5" stroke="#3f7fd0" stroke-width="1.2"/><circle cx="15.5" cy="15.7" r="12" fill="none" stroke="#d8ecfc" stroke-width="1.2"/><circle cx="15.5" cy="15.7" r="10.3" fill="#e6ebf4" stroke="#3a74c8" stroke-width="1.3"/><path d="M23 7.5 L17.5 17 L14 13.5 Z" fill="#e8452c"/><path d="M8 23.5 L13.5 14.5 L17 18 Z" fill="#2f6cc0"/><circle cx="15.5" cy="15.7" r="3.6" fill="#fff" stroke="#2a3a80" stroke-width="1.4"/><circle cx="15.5" cy="15.7" r="1.5" fill="#dde" stroke="#2a3a80" stroke-width="0.6"/></svg>
<svg style="position:absolute;left:1036px;top:188px" width="10" height="6" viewBox="0 0 10 6"><path d="M0.5 5 L5 0.8 L9.5 5" fill="none" stroke="#333" stroke-width="1.2"/></svg>
<svg style="position:absolute;left:184px;top:225px" width="11" height="12" viewBox="0 0 11 12"><path d="M1 1.5 H10 M2.5 1.5 L4.5 5.5 L2 8.5 H9 L6.5 5.5 L8.5 1.5 M5.5 8.5 V11.5" fill="none" stroke="#222" stroke-width="1.2"/></svg>
<svg style="position:absolute;left:100px;top:265px" width="8" height="5" viewBox="0 0 8 5"><path d="M0.5 0.5 L3.75 3.8 L7 0.5" fill="none" stroke="#333" stroke-width="1.2"/></svg>
<svg style="position:absolute;left:129px;top:259px" width="16" height="16" viewBox="0 0 16 16"><rect x="0.5" y="0.5" width="15" height="15" fill="#f6f8fc" stroke="#5a78b8"/><rect x="1" y="1" width="4" height="14" fill="#dde6f5"/><path d="M2 4.5 H5 M3.5 3 V6 M2 10.5 H5 M3.5 9 V12" stroke="#2a3f70" stroke-width="1"/><path d="M7 4.5 H13 M9 7 H13" stroke="#5a78b8"/><path d="M7 10.5 L10 8 V9.5 H14 V11.5 H10 V13 Z" fill="#5aa0e8" stroke="#3a70c0" stroke-width="0.5"/></svg>
<svg style="position:absolute;left:20px;top:296px" width="9" height="5" viewBox="0 0 9 5"><path d="M0.5 0.5 L4.5 4.2 L8.5 0.5" fill="none" stroke="#333" stroke-width="1.2"/></svg>
<svg style="position:absolute;left:22px;top:338px" width="5" height="9" viewBox="0 0 5 9"><path d="M0.5 0.5 L4.2 4.5 L0.5 8.5" fill="none" stroke="#333" stroke-width="1.2"/></svg>
<svg style="position:absolute;left:22px;top:360px" width="5" height="9" viewBox="0 0 5 9"><path d="M0.5 0.5 L4.2 4.5 L0.5 8.5" fill="none" stroke="#333" stroke-width="1.2"/></svg>
<svg style="position:absolute;left:22px;top:382px" width="5" height="9" viewBox="0 0 5 9"><path d="M0.5 0.5 L4.2 4.5 L0.5 8.5" fill="none" stroke="#333" stroke-width="1.2"/></svg>
<svg style="position:absolute;left:22px;top:404px" width="5" height="9" viewBox="0 0 5 9"><path d="M0.5 0.5 L4.2 4.5 L0.5 8.5" fill="none" stroke="#333" stroke-width="1.2"/></svg>
<svg style="position:absolute;left:22px;top:426px" width="5" height="9" viewBox="0 0 5 9"><path d="M0.5 0.5 L4.2 4.5 L0.5 8.5" fill="none" stroke="#333" stroke-width="1.2"/></svg>
<svg style="position:absolute;left:22px;top:448px" width="5" height="9" viewBox="0 0 5 9"><path d="M0.5 0.5 L4.2 4.5 L0.5 8.5" fill="none" stroke="#333" stroke-width="1.2"/></svg>
<svg style="position:absolute;left:22px;top:470px" width="5" height="9" viewBox="0 0 5 9"><path d="M0.5 0.5 L4.2 4.5 L0.5 8.5" fill="none" stroke="#333" stroke-width="1.2"/></svg>
<svg style="position:absolute;left:41px;top:289px" width="17" height="18" viewBox="0 0 17 18"><rect x="3.5" y="0.5" width="13" height="11" rx="1" fill="#f4f7fc" stroke="#6f86bd"/><path d="M11.5 0.5 V11.5 M3.5 6 H16.5" stroke="#6f86bd"/><path d="M5 3 H7 M8 3 H10 M13 3 H15 M8 8 H10" stroke="#e05050" stroke-width="1.2"/><path d="M13.5 8 H14.5" stroke="#5a9ae0" stroke-width="1.2"/><ellipse cx="5" cy="14.5" rx="4.5" ry="3" fill="#6a9ad8" stroke="#4a70b0" stroke-width="0.6"/><circle cx="5" cy="9.5" r="2.4" fill="#c8782a" stroke="#8a4a10" stroke-width="0.5"/><circle cx="4.6" cy="9" r="0.8" fill="#f8d8a0"/></svg>
<svg style="position:absolute;left:65px;top:312px" width="16" height="16" viewBox="0 0 16 16"><rect x="0.5" y="0.5" width="15" height="15" rx="1" fill="#f8f9fc" stroke="#6f86bd"/><path d="M10.5 0.5 V15.5 M0.5 8 H15.5 M10.5 11.5 H15.5" stroke="#6f86bd"/><rect x="2.5" y="2.5" width="6" height="4" fill="none" stroke="#5a8ad0" stroke-width="0.8"/><path d="M3 2.5 L8 6.5" stroke="#222" stroke-width="1.1"/><circle cx="5.5" cy="12" r="2.5" fill="none" stroke="#e08080" stroke-width="1"/><path d="M7 11 L9 12.5" stroke="#222" stroke-width="1.2"/><path d="M12 3 L14 5 M12 5 H13" stroke="#d04040"/><path d="M12.5 9.5 V11 M14 9.5 V11" stroke="#e05050"/></svg>
<svg style="position:absolute;left:40px;top:333px" width="18" height="18" viewBox="0 0 18 18"><defs><radialGradient id="gglobe" cx="0.4" cy="0.35" r="0.7"><stop offset="0" stop-color="#a8c8f0"/><stop offset="1" stop-color="#3a68b0"/></radialGradient></defs><circle cx="6.5" cy="6" r="5.5" fill="url(#gglobe)"/><path d="M1.0 6 H12.0 M6.5 0.5 V11.5 M1.8250000000000002 3.25 H11.175 M1.8250000000000002 8.75 H11.175" stroke="#9ec0ea" stroke-width="0.5" opacity="0.7"/><rect x="4.5" y="6.5" width="12" height="10" fill="#f6f8fc" stroke="#7a8ec0"/><rect x="4.5" y="6.5" width="12" height="2.5" fill="#e05a4a"/><rect x="6" y="10.5" width="3.5" height="3.5" fill="#d83a30"/><path d="M11 11 H12 M13.5 11 H14.5 M11 13.5 H12 M13.5 13.5 H14.5" stroke="#7f93c8" stroke-width="1"/></svg>
<svg style="position:absolute;left:40px;top:355px" width="18" height="18" viewBox="0 0 18 18"><defs><radialGradient id="gglobe" cx="0.4" cy="0.35" r="0.7"><stop offset="0" stop-color="#a8c8f0"/><stop offset="1" stop-color="#3a68b0"/></radialGradient></defs><circle cx="9" cy="9" r="6" fill="url(#gglobe)"/><path d="M3 9 H15 M9 3 V15 M3.9000000000000004 6.0 H14.1 M3.9000000000000004 12.0 H14.1" stroke="#9ec0ea" stroke-width="0.5" opacity="0.7"/><path d="M2.5 10 Q2.5 2.5 9 2.5 Q15.5 2.5 15.5 10" fill="none" stroke="#2f3f5e" stroke-width="1.2"/><rect x="1" y="8.5" width="3" height="4" rx="1" fill="#2f3f5e"/><rect x="14" y="8.5" width="3" height="4" rx="1" fill="#2f3f5e"/><path d="M3 12.5 Q5 14 8 13.5" stroke="#eee" stroke-width="1" fill="none"/></svg>
<svg style="position:absolute;left:40px;top:377px" width="18" height="18" viewBox="0 0 18 18"><defs><radialGradient id="gglobe" cx="0.4" cy="0.35" r="0.7"><stop offset="0" stop-color="#a8c8f0"/><stop offset="1" stop-color="#3a68b0"/></radialGradient></defs><circle cx="6.2" cy="5.6" r="5.5" fill="url(#gglobe)"/><path d="M0.7000000000000002 5.6 H11.7 M6.2 0.09999999999999964 V11.1 M1.5250000000000004 2.8499999999999996 H10.875 M1.5250000000000004 8.35 H10.875" stroke="#9ec0ea" stroke-width="0.5" opacity="0.7"/><path d="M10.8 5.5 L17.2 16.8 H4.8 Z" fill="#f4c020" stroke="#e0a010" stroke-width="0.6"/><path d="M10.8 9 V13" stroke="#8a7a50" stroke-width="1.5"/><circle cx="10.8" cy="14.8" r="0.8" fill="#8a7a50"/></svg>
<svg style="position:absolute;left:40px;top:399px" width="18" height="18" viewBox="0 0 18 18"><defs><radialGradient id="gglobe" cx="0.4" cy="0.35" r="0.7"><stop offset="0" stop-color="#a8c8f0"/><stop offset="1" stop-color="#3a68b0"/></radialGradient></defs><circle cx="6.2" cy="5.6" r="5.5" fill="url(#gglobe)"/><path d="M0.7000000000000002 5.6 H11.7 M6.2 0.09999999999999964 V11.1 M1.5250000000000004 2.8499999999999996 H10.875 M1.5250000000000004 8.35 H10.875" stroke="#9ec0ea" stroke-width="0.5" opacity="0.7"/><circle cx="11.8" cy="11.8" r="5" fill="#d03030" stroke="#a82020" stroke-width="0.5"/><path d="M9.8 9.8 L13.8 13.8 M13.8 9.8 L9.8 13.8" stroke="#fff" stroke-width="1.4"/></svg>
<svg style="position:absolute;left:40px;top:421px" width="18" height="18" viewBox="0 0 18 18"><circle cx="12.5" cy="5.7" r="4.3" fill="#fff" stroke="#e04848" stroke-width="1.2"/><rect x="1" y="8" width="9" height="8.7" fill="#7cbf3a" stroke="#3f7a1a" stroke-width="0.8"/><path d="M4 10 Q5 5 10 4.5 V2.5 L14 6 L10 9 V7 Q7 7 4 10 Z" fill="#5a90e0" stroke="#3a68b8" stroke-width="0.5"/></svg>
<svg style="position:absolute;left:40px;top:443px" width="18" height="18" viewBox="0 0 18 18"><rect x="3.5" y="2.5" width="11.5" height="13.5" rx="1" fill="#f0a040" stroke="#c87a20"/><rect x="5" y="4.5" width="8.5" height="10" fill="#f8f8fb"/><rect x="6.5" y="1" width="5.5" height="2.8" rx="1" fill="#e0e3ea" stroke="#8a90a0" stroke-width="0.6"/><path d="M5.5 9.5 L8 12 L13.5 5.5" fill="none" stroke="#5cc030" stroke-width="2"/></svg>
<svg style="position:absolute;left:40px;top:465px" width="18" height="18" viewBox="0 0 18 18"><circle cx="8.5" cy="5.5" r="4.2" fill="#f6f8fc" stroke="#4a78c0" stroke-width="1.1"/><path d="M8.5 5.5 L8.5 9 M6 4.5 L8 5" stroke="#c03030" stroke-width="0.9"/><rect x="1.5" y="9" width="15.5" height="7.5" rx="1.5" fill="#6f9ad8" stroke="#4a70b0" stroke-width="0.6"/><rect x="2.6" y="10.5" width="2" height="2" fill="#f0c040"/><rect x="5.5" y="10.5" width="2" height="2" fill="#fff"/><rect x="8.4" y="10.5" width="2" height="2" fill="#fff"/><rect x="11.3" y="10.5" width="2" height="2" fill="#fff"/><rect x="14.2" y="10.5" width="2" height="2" fill="#fff"/><rect x="2.6" y="13.5" width="2" height="2" fill="#fff"/><rect x="5.5" y="13.5" width="2" height="2" fill="#3a9a3a"/><rect x="8.4" y="13.5" width="2" height="2" fill="#3a9a3a"/><rect x="11.3" y="13.5" width="2" height="2" fill="#d83a30"/><rect x="14.2" y="13.5" width="2" height="2" fill="#fff"/></svg>
<svg style="position:absolute;left:632px;top:226px" width="10" height="10" viewBox="0 0 10 10"><rect x="0.6" y="0.6" width="8.8" height="8.8" rx="1.3" fill="none" stroke="#222" stroke-width="1.2"/></svg>
<svg style="position:absolute;left:658px;top:226px" width="11" height="11" viewBox="0 0 11 11"><path d="M0.5 0.5 L10 10 M10 0.5 L0.5 10" stroke="#222" stroke-width="1.1"/></svg>
<svg style="position:absolute;left:632px;top:477px" width="10" height="10" viewBox="0 0 10 10"><rect x="0.6" y="0.6" width="8.8" height="8.8" rx="1.3" fill="none" stroke="#222" stroke-width="1.2"/></svg>
<svg style="position:absolute;left:658px;top:477px" width="11" height="11" viewBox="0 0 11 11"><path d="M0.5 0.5 L10 10 M10 0.5 L0.5 10" stroke="#222" stroke-width="1.1"/></svg>
<svg style="position:absolute;left:987px;top:226px" width="10" height="10" viewBox="0 0 10 10"><rect x="0.6" y="0.6" width="8.8" height="8.8" rx="1.3" fill="none" stroke="#222" stroke-width="1.2"/></svg>
<svg style="position:absolute;left:1013px;top:226px" width="11" height="11" viewBox="0 0 11 11"><path d="M0.5 0.5 L10 10 M10 0.5 L0.5 10" stroke="#222" stroke-width="1.1"/></svg>
<svg style="position:absolute;left:810px;top:559px" width="10" height="10" viewBox="0 0 10 10"><rect x="0.6" y="0.6" width="8.8" height="8.8" rx="1.3" fill="none" stroke="#222" stroke-width="1.2"/></svg>
<svg style="position:absolute;left:836px;top:559px" width="11" height="11" viewBox="0 0 11 11"><path d="M0.5 0.5 L10 10 M10 0.5 L0.5 10" stroke="#222" stroke-width="1.1"/></svg>
<svg style="position:absolute;left:987px;top:559px" width="10" height="10" viewBox="0 0 10 10"><rect x="0.6" y="0.6" width="8.8" height="8.8" rx="1.3" fill="none" stroke="#222" stroke-width="1.2"/></svg>
<svg style="position:absolute;left:1013px;top:559px" width="11" height="11" viewBox="0 0 11 11"><path d="M0.5 0.5 L10 10 M10 0.5 L0.5 10" stroke="#222" stroke-width="1.1"/></svg>
<svg style="position:absolute;left:661px;top:258px" width="12" height="8" viewBox="0 0 12 8"><path d="M4 0.5 H7.5 M2 3.5 H9.5 M0 6.5 H11.5" stroke="#222" stroke-width="1.1"/></svg>
<svg style="position:absolute;left:644px;top:509px" width="12" height="8" viewBox="0 0 12 8"><path d="M4 0.5 H7.5 M2 3.5 H9.5 M0 6.5 H11.5" stroke="#222" stroke-width="1.1"/></svg>
<svg style="position:absolute;left:0;top:0" width="1086" height="744"><path d="M781.4 680 A43 43 0 1 1 818.64 658.50" fill="none" stroke="#ebebeb" stroke-width="4.5" stroke-linecap="round"/><circle cx="781.4" cy="680" r="2.8" fill="#f7a01c"/></svg>
<svg style="position:absolute;left:0;top:0" width="1086" height="744"><ellipse cx="781.0" cy="637.4" rx="3.9" ry="5.2" fill="none" stroke="#f7a01c" stroke-width="1.2"/></svg>
<svg style="position:absolute;left:0;top:0" width="1086" height="744"><path d="M958.6 680 A43 43 0 1 1 995.84 658.50" fill="none" stroke="#ebebeb" stroke-width="4.5" stroke-linecap="round"/><circle cx="958.6" cy="680" r="2.8" fill="#f7a01c"/></svg>
<svg style="position:absolute;left:0;top:0" width="1086" height="744"><ellipse cx="958.2" cy="637.4" rx="3.9" ry="5.2" fill="none" stroke="#f7a01c" stroke-width="1.2"/></svg>
<div class="t" style="left:1063px;top:226.5px;font-size:11px;color:#1f1f1f;transform-origin:0 0;transform:rotate(90deg);letter-spacing:-0.1px">Clock</div>
<div class="t" style="left:1063px;top:281px;font-size:11px;color:#1f1f1f;transform-origin:0 0;transform:rotate(90deg);letter-spacing:-0.2px">Calendar</div>
<svg style="position:absolute;left:990px;top:712px" width="18" height="9" viewBox="0 0 18 9"><path d="M1 4.5 L4 3 V6 Z M17 4.5 L14 3 V6 Z" fill="#6a7088" stroke="#6a7088" stroke-width="0.8"/><rect x="4.6" y="1.2" width="8.8" height="6.6" rx="1.6" fill="#9ccbf2" stroke="#4a5a98" stroke-width="1"/><rect x="6" y="2.6" width="6" height="3.6" fill="#b8dcf8"/></svg>
<div style="position:absolute;left:1011px;top:704px;width:1px;height:23px;background:#d0d0d0"></div>
<div style="position:absolute;left:1066px;top:720px;width:2px;height:2px;background:#9a9a9a"></div>
<div style="position:absolute;left:1070px;top:720px;width:2px;height:2px;background:#9a9a9a"></div>
<div style="position:absolute;left:1066px;top:724px;width:2px;height:2px;background:#9a9a9a"></div>
<div style="position:absolute;left:1070px;top:724px;width:2px;height:2px;background:#9a9a9a"></div>
</body></html>
